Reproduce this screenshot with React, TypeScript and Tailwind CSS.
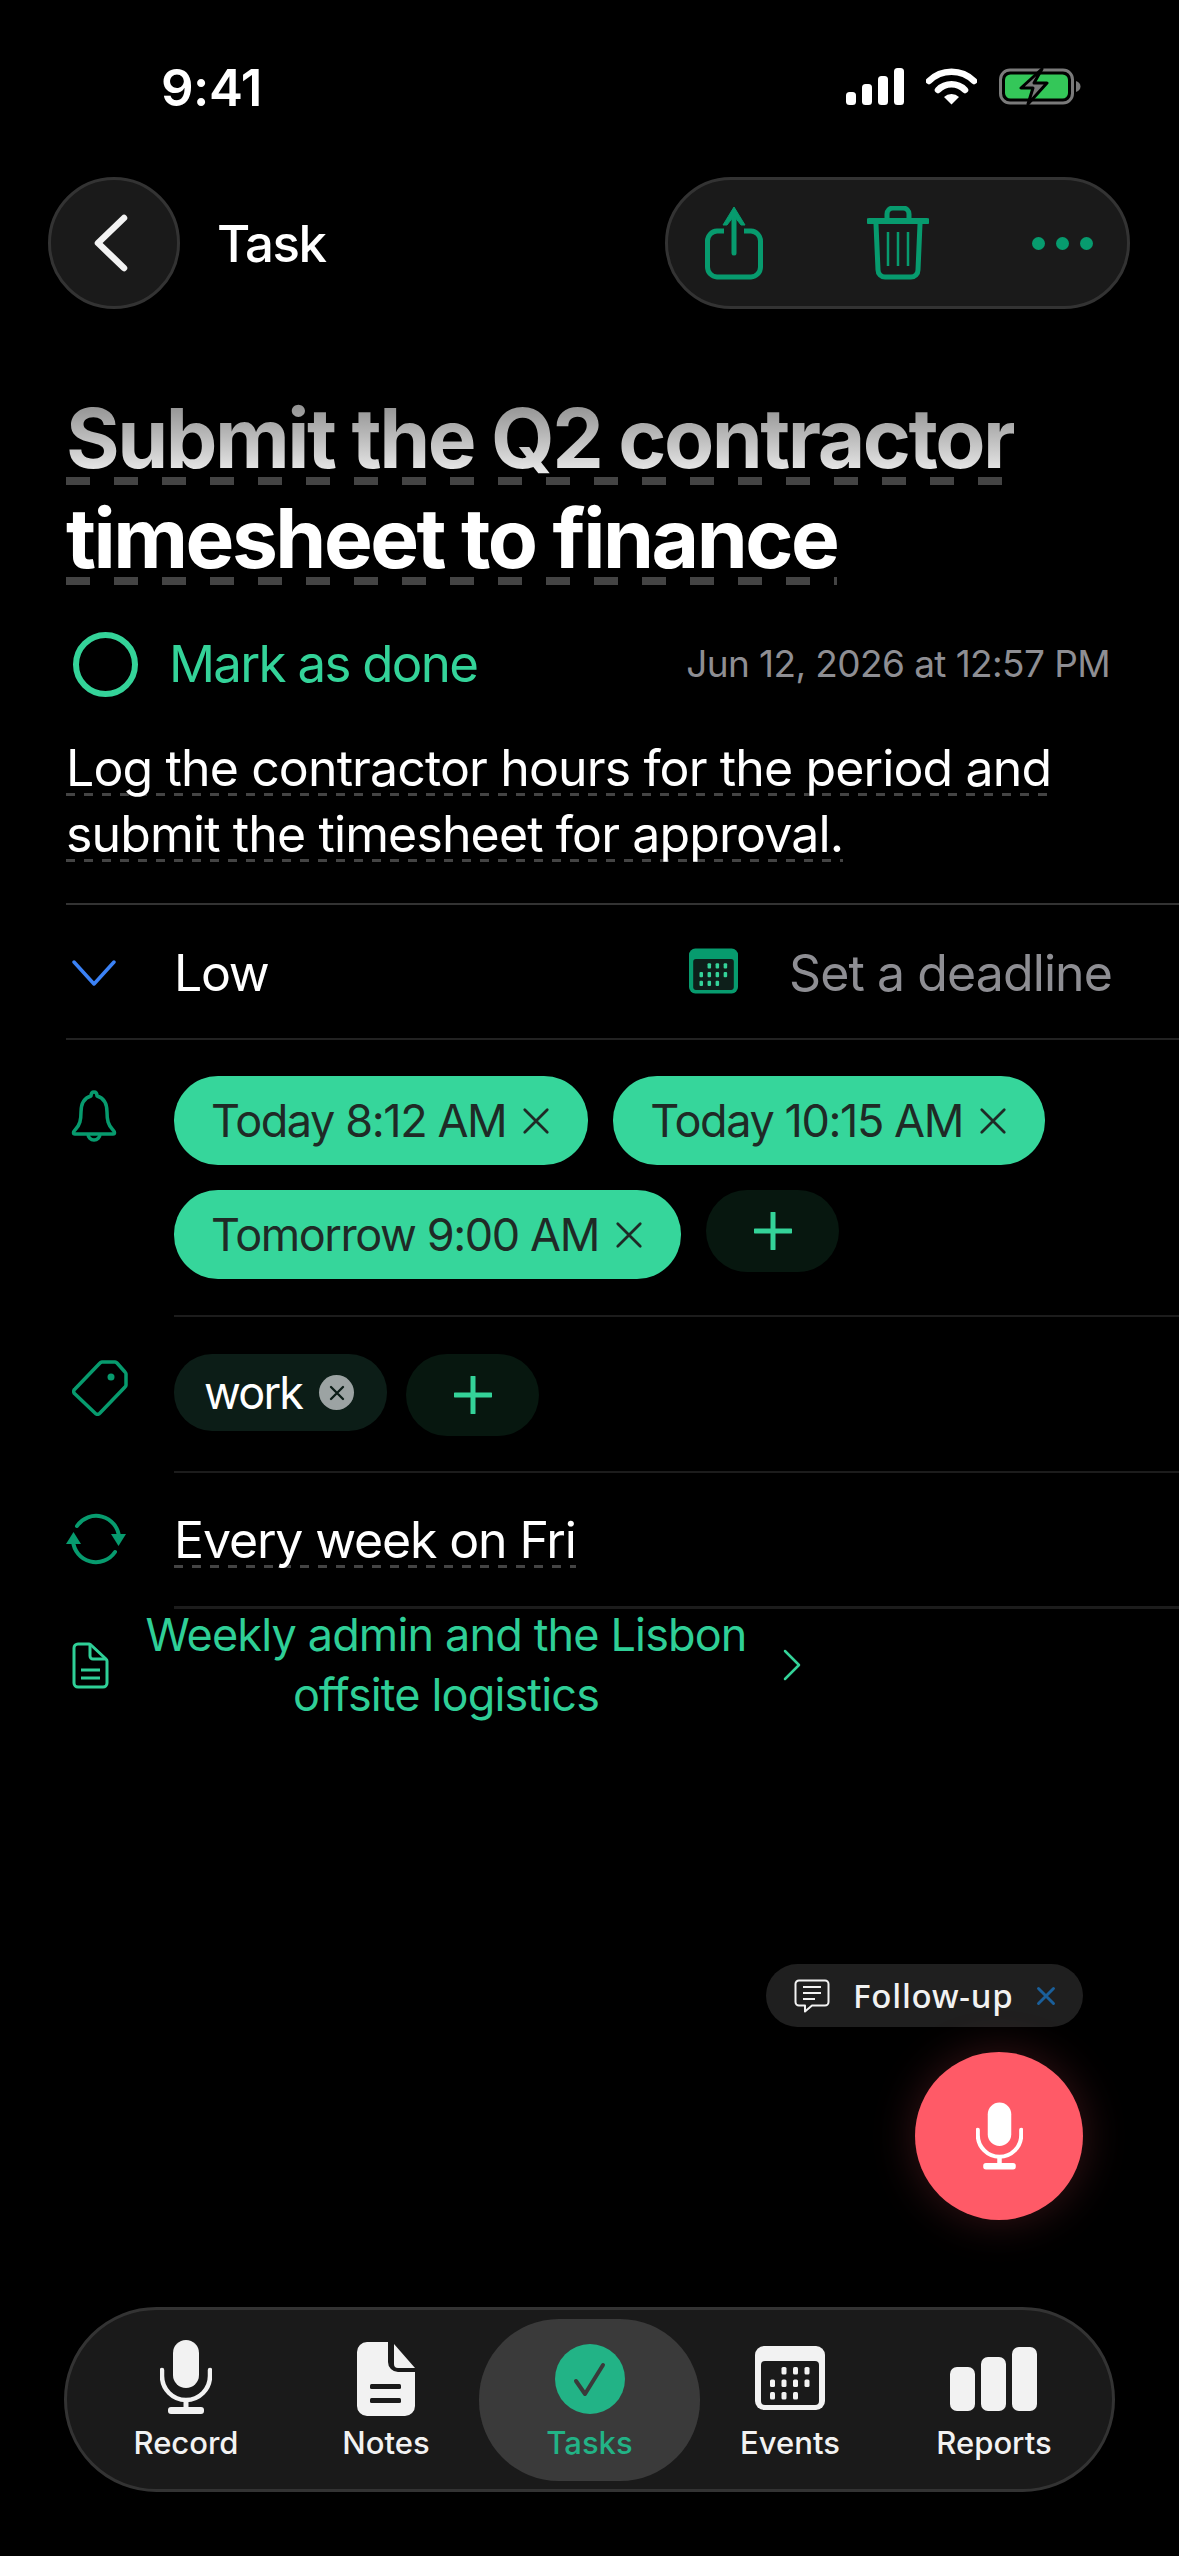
import React from 'react';

const GREEN = '#079b6e';

// dashed rule painted behind a line of text, so the dash length is the picture's and not the browser's
const TITLE_DASH = 'block w-fit bg-[repeating-linear-gradient(90deg,#444444_0_24px,transparent_24px_48px)] bg-[length:100%_8px] bg-[position:0_88px] bg-no-repeat';
const TEXT_DASH = 'block w-fit bg-[repeating-linear-gradient(90deg,#444444_0_9px,transparent_9px_18px)] bg-[length:100%_3px] bg-[position:0_58px] bg-no-repeat [text-shadow:0_0_3px_#000000]';

const CalendarIcon = ({ className, color, dots, inner }: { className: string; color: string; dots: string; inner: string }) => {
  const cells = [
    [1, 0], [2, 0], [3, 0],
    [0, 1], [1, 1], [2, 1], [3, 1],
    [0, 2], [1, 2], [2, 2],
  ];
  return (
    <svg viewBox="0 0 70 64" className={className}>
      <rect width="70" height="64" rx="9" fill={color} />
      <rect x="6" y="15" width="58" height="44" rx="4" fill={inner} />
      {cells.map(([c, r]) => (
        <rect key={`${c}-${r}`} x={15 + c * 11.5} y={21 + r * 12.5} width="5" height="7.5" rx="1.5" fill={dots} />
      ))}
    </svg>
  );
};

const Mic = ({ className, color }: { className: string; color: string }) => (
  <svg viewBox="0 0 52 74" className={className} fill="none">
    <rect x="13" y="0" width="26" height="48" rx="13" fill={color} />
    <path d="M2 30v6a24 24 0 0 0 48 0v-6" stroke={color} strokeWidth="4.5" strokeLinecap="round" />
    <path d="M26 60v8" stroke={color} strokeWidth="5" />
    <rect x="8" y="67" width="36" height="7" rx="3" fill={color} />
  </svg>
);

const XMark = ({ className, color, width = 3 }: { className: string; color: string; width?: number }) => (
  <svg viewBox="0 0 24 24" className={className} fill="none">
    <path d="M3 3l18 18M21 3L3 21" stroke={color} strokeWidth={width} strokeLinecap="round" />
  </svg>
);

const Plus = () => (
  <svg viewBox="0 0 38 38" className="h-[38px] w-[38px]" fill="none">
    <path d="M19 1v36M1 19h36" stroke="#34d399" strokeWidth="5" strokeLinecap="round" />
  </svg>
);

const Chip = ({ label }: { label: string }) => (
  <div className="flex h-[89px] items-center gap-[15px] rounded-[44px] bg-[#36d69b] pl-[37px] pr-[37px] text-[45px] tracking-[-1.4px] text-[#1f2a26]">
    <span>{label}</span>
    <XMark className="h-[30px] w-[30px]" color="#1f2a26" width={2.2} />
  </div>
);

const tabs = [
  {
    label: 'Record',
    width: 'w-[226px] pl-[12px]',
    icon: <Mic className="mb-[2px] h-[74px] w-[52px]" color="#f2f2f2" />,
  },
  {
    label: 'Notes',
    width: 'w-[186px]',
    icon: (
      <svg viewBox="0 0 58 74" className="h-[74px] w-[58px]">
        <path d="M10 0h21v20a10 10 0 0 0 10 10h17v34a10 10 0 0 1-10 10H10A10 10 0 0 1 0 64V10A10 10 0 0 1 10 0z" fill="#f2f2f2" />
        <path d="M37 2l21 24H41a4 4 0 0 1-4-4z" fill="#f2f2f2" />
        <rect x="13" y="42" width="31" height="5" rx="1.5" fill="#1a1a1a" />
        <rect x="13" y="56" width="31" height="5" rx="1.5" fill="#1a1a1a" />
      </svg>
    ),
  },
  {
    label: 'Tasks',
    width: 'w-[221px] rounded-[80px] bg-[#3a3a3a]',
    active: true,
    icon: (
      <svg viewBox="0 0 70 70" className="mb-[2px] h-[70px] w-[70px]" fill="none">
        <circle cx="35" cy="35" r="35" fill="#22b386" />
        <path d="M21 37l9 13 18-29" stroke="#3a3a3a" strokeWidth="4" strokeLinecap="round" strokeLinejoin="round" />
      </svg>
    ),
  },
  {
    label: 'Events',
    width: 'w-[180px]',
    icon: <CalendarIcon className="mb-[6px] h-[64px] w-[70px]" color="#f2f2f2" inner="#1a1a1a" dots="#f2f2f2" />,
  },
  {
    label: 'Reports',
    width: 'w-[228px]',
    icon: (
      <svg viewBox="0 0 88 64" className="mb-[5px] h-[64px] w-[88px]" fill="#f2f2f2">
        <rect x="0" y="20" width="25" height="44" rx="7" />
        <rect x="31" y="10" width="25" height="54" rx="7" />
        <rect x="62" y="0" width="25" height="64" rx="7" />
      </svg>
    ),
  },
];

export default function App() {
  return (
    <div className="flex h-[2556px] w-full flex-col overflow-hidden bg-black font-['Inter',sans-serif] text-white">
      {/* status bar */}
      <div className="flex h-[177px] shrink-0 items-start justify-between pl-[161px] pr-[98px] pt-[59px]">
        <span className="text-[51px] font-semibold leading-[58px] tracking-[-0.5px]">9:41</span>
        <div className="flex items-center gap-[22px] pt-[9px]">
          <svg viewBox="0 0 58 37" className="h-[37px] w-[58px]" fill="#fff">
            <rect x="0" y="24" width="10" height="13" rx="3.5" />
            <rect x="16" y="16" width="10" height="21" rx="3.5" />
            <rect x="32" y="8" width="10" height="29" rx="3.5" />
            <rect x="48" y="0" width="10" height="37" rx="3.5" />
          </svg>
          <svg viewBox="0 0 51 37" className="h-[37px] w-[51px]" fill="none">
            <path d="M3 13a32 32 0 0 1 45 0" stroke="#fff" strokeWidth="6.5" strokeLinecap="round" />
            <path d="M12 22a19 19 0 0 1 27 0" stroke="#fff" strokeWidth="6.5" strokeLinecap="round" />
            <path d="M18 29l7.500 7.500L33 29a11 11 0 0 0-15 0z" fill="#fff" />
          </svg>
          <svg viewBox="0 0 82 37" className="h-[37px] w-[82px]" fill="none">
            <rect x="1.500" y="2" width="72" height="33" rx="9.500" stroke="#7a7a7a" strokeWidth="3" />
            <rect x="6" y="6.500" width="63" height="24" rx="5.500" fill="#34c759" />
            <path d="M77 13c3 1 4.500 3 4.500 5.500s-1.500 4.500-4.500 5.500z" fill="#7a7a7a" />
            <path d="M43 1L22 20h12l-5 16 19-21H35z" fill="#7a7a7a" stroke="#000" strokeWidth="3" strokeLinejoin="round" />
          </svg>
        </div>
      </div>

      {/* header */}
      <div className="flex h-[132px] shrink-0 items-center justify-between pl-[48px] pr-[49px]">
        <div className="flex items-center gap-[37px]">
          <div className="flex h-[132px] w-[132px] items-center justify-center rounded-full border-[3px] border-[#333333] bg-[#1a1a1a]">
            <svg viewBox="0 0 34 58" className="mr-[6px] h-[58px] w-[34px]" fill="none">
              <path d="M30 4L4 29l26 25" stroke="#f2f2f2" strokeWidth="6.500" strokeLinecap="round" strokeLinejoin="round" />
            </svg>
          </div>
          <span className="pt-[2px] text-[51px] font-medium tracking-[-1.5px]">Task</span>
        </div>
        <div className="flex h-[132px] w-[465px] items-center rounded-full border-[3px] border-[#333333] bg-[#1a1a1a] pl-[37px]">
          <svg viewBox="0 0 58 74" className="h-[74px] w-[58px]" fill="none">
            <path d="M19 25h-7A10 10 0 0 0 2.500 35v26A10 10 0 0 0 12 71h34a10 10 0 0 0 9.500-10V35A10 10 0 0 0 46 25h-7" stroke={GREEN} strokeWidth="5" />
            <path d="M29 6v41" stroke={GREEN} strokeWidth="5" strokeLinecap="round" />
            <path d="M29 1l-11 18h4l7-9 7 9h4z" fill={GREEN} stroke={GREEN} strokeWidth="1" />
          </svg>
          <svg viewBox="0 0 62 74" className="ml-[104px] h-[74px] w-[62px]" fill="none">
            <path d="M20 12V8a6 6 0 0 1 6-6h10a6 6 0 0 1 6 6v4" stroke={GREEN} strokeWidth="5" />
            <path d="M2 15h58" stroke={GREEN} strokeWidth="6" strokeLinecap="round" />
            <path d="M9 18l2 46a7 7 0 0 0 7 7h26a7 7 0 0 0 7-7l2-46" stroke={GREEN} strokeWidth="5" />
            <path d="M21 26v34M31 26v34M41 26v34" stroke={GREEN} strokeWidth="2.500" />
          </svg>
          <div className="ml-[103px] flex items-center gap-[11px]">
            <span className="h-[13px] w-[13px] rounded-full bg-[#079b6e]" />
            <span className="h-[13px] w-[13px] rounded-full bg-[#079b6e]" />
            <span className="h-[13px] w-[13px] rounded-full bg-[#079b6e]" />
          </div>
        </div>
      </div>

      {/* title */}
      <h1 className="pl-[66px] pt-[80px] text-[82px] font-bold leading-[100px] tracking-[-2.5px]">
        <span className={TITLE_DASH}>
          <span className="block bg-gradient-to-b from-[#808080] to-[#ffffff] bg-clip-text text-transparent">
            Submit the Q2 contractor
          </span>
        </span>
        <span className={TITLE_DASH}>timesheet to finance</span>
      </h1>

      {/* done row */}
      <div className="mt-[42px] flex h-[66px] items-center justify-between pl-[73px] pr-[69px]">
        <div className="flex items-center gap-[31px]">
          <div className="h-[65px] w-[65px] rounded-full border-[6px] border-[#34d399]" />
          <span className="text-[51px] tracking-[-1.7px] text-[#34d399]">Mark as done</span>
        </div>
        <span className="text-[37px] tracking-[-0.6px] text-[#8e8e93]">Jun 12, 2026 at 12:57 PM</span>
      </div>

      {/* description */}
      <p className="mt-[38px] pl-[66px] pr-[60px] text-[50px] leading-[66px] tracking-[-0.87px]">
        <span className={TEXT_DASH}>Log the contractor hours for the period and</span>
        <span className={TEXT_DASH}>submit the timesheet for approval.</span>
      </p>

      {/* priority and deadline */}
      <div className="ml-[66px] mt-[36px] flex h-[135px] items-center border-t-[2px] border-[#333333] pr-[67px] pt-[3px]">
        <div className="w-[108px] pl-[6px]">
          <svg viewBox="0 0 44 26" className="h-[26px] w-[44px]" fill="none">
            <path d="M2 2l20 22L42 2" stroke="#3b82f6" strokeWidth="3.500" strokeLinecap="round" strokeLinejoin="round" />
          </svg>
        </div>
        <span className="text-[50px] tracking-[-1.3px]">Low</span>
        <div className="ml-auto flex items-center gap-[51px]">
          <CalendarIcon className="mb-[4px] h-[46px] w-[49px]" color={GREEN} inner="#0d1f1a" dots="#34d399" />
          <span className="text-[50px] tracking-[-0.9px] text-[#8e8e93]">Set a deadline</span>
        </div>
      </div>

      {/* reminders */}
      <div className="ml-[66px] flex border-t-[2px] border-[#222222] pb-[36px] pt-[36px]">
        <div className="w-[108px] pl-[4px] pt-[14px]">
          <svg viewBox="0 0 48 52" className="h-[52px] w-[48px]" fill="none">
            <path d="M24 2c-2 0-3 1.500-3 4-7 2-10 8-10 16 0 8-1 13-6 18-2 2-2 4 0 4h38c2 0 2-2 0-4-5-5-6-10-6-18 0-8-3-14-10-16 0-2.500-1-4-3-4z" stroke={GREEN} strokeWidth="3.500" strokeLinejoin="round" />
            <path d="M18 44a6 6 0 0 0 12 0" stroke={GREEN} strokeWidth="3.500" />
          </svg>
        </div>
        <div className="flex flex-1 flex-wrap items-start gap-[25px] pr-[120px]">
          <Chip label="Today 8:12 AM" />
          <Chip label="Today 10:15 AM" />
          <Chip label="Tomorrow 9:00 AM" />
          <div className="flex h-[82px] w-[133px] items-center justify-center rounded-[41px] bg-[#07170f]">
            <Plus />
          </div>
        </div>
      </div>

      {/* tags */}
      <div className="ml-[66px] flex">
        <div className="w-[108px] pl-[6px] pt-[45px]">
          <svg viewBox="0 0 56 56" className="h-[56px] w-[56px]" fill="none">
            <path d="M30 2h13a3 3 0 0 1 2 1l8 9a3 3 0 0 1 1 2v11a3 3 0 0 1-1 2L28 53a3 3 0 0 1-5 0L3 34a3 3 0 0 1 0-5L28 3a3 3 0 0 1 2-1z" stroke={GREEN} strokeWidth="3.500" strokeLinejoin="round" />
            <circle cx="39" cy="17" r="3.500" fill={GREEN} />
          </svg>
        </div>
        <div className="flex h-[156px] flex-1 items-start gap-[19px] border-t-[2px] border-[#1c1c1c] pt-[37px]">
          <div className="flex h-[77px] w-[213px] items-center gap-[17px] rounded-[38px] bg-[#0c1d17] pl-[30px] text-[45px] tracking-[-1.8px]">
            <span>work</span>
            <div className="flex h-[35px] w-[35px] items-center justify-center rounded-full bg-[#9ca3a3]">
              <XMark className="h-[16px] w-[16px]" color="#0c1d17" width={3.5} />
            </div>
          </div>
          <div className="flex h-[82px] w-[133px] items-center justify-center rounded-[41px] bg-[#07170f]">
            <Plus />
          </div>
        </div>
      </div>

      {/* recurrence */}
      <div className="ml-[66px] flex">
        <div className="flex w-[108px] items-center">
          <svg viewBox="0 0 60 52" className="h-[52px] w-[60px]" fill="none">
            <path d="M11 13A23 23 0 0 1 53 24" stroke={GREEN} strokeWidth="4" strokeLinecap="round" />
            <path d="M7 28A23 23 0 0 0 49 39" stroke={GREEN} strokeWidth="4" strokeLinecap="round" />
            <path d="M0 31l7.500-12 7.500 12z" fill={GREEN} />
            <path d="M45 21h15l-7.500 12z" fill={GREEN} />
          </svg>
        </div>
        <div className="flex h-[135px] flex-1 items-center border-t-[2px] border-[#1c1c1c]">
          <span className={`${TEXT_DASH} text-[50px] leading-[66px] tracking-[-1.15px]`}>Every week on Fri</span>
        </div>
      </div>

      {/* linked note */}
      <div className="ml-[174px] border-t-[3px] border-[#1c1c1c]" />
      <div className="ml-[66px] mt-[-4px] flex items-center pl-[6px]">
        <svg viewBox="0 0 37 47" className="h-[47px] w-[37px]" fill="none">
          <path d="M6 2h11a3 3 0 0 1 2 1l15 14a3 3 0 0 1 1 2v22a4 4 0 0 1-4 4H6a4 4 0 0 1-4-4V6a4 4 0 0 1 4-4z" stroke="#2fcf97" strokeWidth="3" strokeLinejoin="round" />
          <path d="M18 3v11a3 3 0 0 0 3 3h13" stroke="#2fcf97" strokeWidth="3" />
          <path d="M9 28h19M9 36h19" stroke="#2fcf97" strokeWidth="3" />
        </svg>
        <p className="ml-[27px] w-[620px] whitespace-nowrap text-center text-[45px] leading-[60px] tracking-[-0.85px] text-[#2fcf97]">
          Weekly admin and the Lisbon
          <br />
          offsite logistics
        </p>
        <svg viewBox="0 0 18 32" className="ml-[27px] h-[32px] w-[18px]" fill="none">
          <path d="M2 2l14 14L2 30" stroke="#34d399" strokeWidth="2.500" strokeLinecap="round" strokeLinejoin="round" />
        </svg>
      </div>

      {/* voice actions */}
      <div className="mt-auto flex flex-col items-end pr-[96px]">
        <div className="flex h-[63px] w-[317px] items-center rounded-full bg-[#1f1f1f] pl-[28px] font-['Noto_Sans',sans-serif] text-[33px] font-medium tracking-[0.8px] text-[#f2f2f2]">
          <svg viewBox="0 0 36 34" className="h-[34px] w-[36px]" fill="none">
            <path d="M5 1.500h26a3.500 3.500 0 0 1 3.500 3.500v18a3.500 3.500 0 0 1-3.500 3.500H18l-7 6v-6H5A3.500 3.500 0 0 1 1.500 23V5A3.500 3.500 0 0 1 5 1.500z" stroke="#f2f2f2" strokeWidth="2" strokeLinejoin="round" />
            <path d="M9 8h18M9 14h18M9 20h12" stroke="#f2f2f2" strokeWidth="2" />
          </svg>
          <span className="ml-[23px]">Follow-up</span>
          <XMark className="ml-[22px] h-[20px] w-[20px]" color="#1a5f9a" width={3.5} />
        </div>
        <div className="mt-[25px] flex h-[168px] w-[168px] items-center justify-center rounded-full bg-[#ff5a67] shadow-[0_0_44px_rgba(255,90,103,0.22)]">
          <Mic className="h-[70px] w-[47px]" color="#ffffff" />
        </div>
      </div>

      {/* tab bar */}
      <div className="mx-[64px] mb-[64px] mt-[87px] flex h-[185px] shrink-0 items-center rounded-full border-[3px] border-[#333333] bg-[#1a1a1a]">
        {tabs.map(t => (
          <div key={t.label} className={`flex h-[162px] flex-col items-center justify-start ${t.width}`}>
            <div className="flex h-[97px] shrink-0 items-end justify-center">{t.icon}</div>
            <span className={`mt-[7px] text-[31px] font-medium leading-[40px] ${t.active ? 'text-[#22b386]' : 'text-[#f2f2f2]'}`}>
              {t.label}
            </span>
          </div>
        ))}
      </div>
    </div>
  );
}
